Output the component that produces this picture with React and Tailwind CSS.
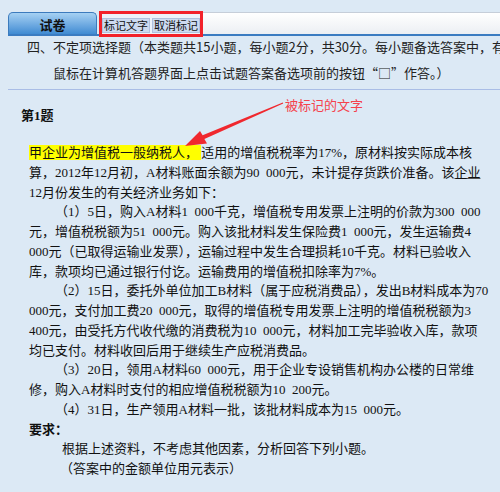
export default function App() {
  const lines = [
    { pad: "pl-[26px]", text: "（1）5日，购入A材料1\u2002000千克，增值税专用发票上注明的价款为300\u2002000" },
    { pad: "", text: "元，增值税税额为51\u2002000元。购入该批材料发生保险费1\u2002000元，发生运输费4" },
    { pad: "", text: "000元（已取得运输业发票），运输过程中发生合理损耗10千克。材料已验收入" },
    { pad: "", text: "库，款项均已通过银行付讫。运输费用的增值税扣除率为7%。" },
    { pad: "pl-[26px]", text: "（2）15日，委托外单位加工B材料（属于应税消费品），发出B材料成本为70" },
    { pad: "", text: "000元，支付加工费20\u2002000元，取得的增值税专用发票上注明的增值税税额为3" },
    { pad: "", text: "400元，由受托方代收代缴的消费税为10\u2002000元，材料加工完毕验收入库，款项" },
    { pad: "", text: "均已支付。材料收回后用于继续生产应税消费品。" },
    { pad: "pl-[26px]", text: "（3）20日，领用A材料60\u2002000元，用于企业专设销售机构办公楼的日常维" },
    { pad: "", text: "修，购入A材料时支付的相应增值税税额为10\u2002200元。" },
    { pad: "pl-[26px]", text: "（4）31日，生产领用A材料一批，该批材料成本为15\u2002000元。" },
  ];

  return (
    <div className="relative w-[500px] h-[492px] overflow-hidden bg-[#dce9f5] text-[#111]">
      {/* tab bar */}
      <div className="ml-2 mt-3 flex items-start h-[22px]">
        <div className="w-[89px] h-[22px] rounded-t-[5px] border border-b-0 border-[#3c7bbd] bg-gradient-to-b from-[#a6d1f3] to-[#3f8bd2] flex items-center justify-center text-[13px] font-bold font-['Noto_Sans_CJK_SC',sans-serif] pt-[2px]">
          试卷
        </div>
        <div className="relative z-10 ml-[2px] -mt-px w-[104px] h-[26px] border-[3px] border-[#f2222b] bg-[#edf2fa] flex items-center justify-center gap-[2px] pt-[2px]">
          <button className="h-[15px] px-px bg-[#ccdaf0] border border-[#b0c1de] text-[11px] leading-none whitespace-nowrap text-[#111] font-['Noto_Sans_CJK_SC',sans-serif]">
            标记文字
          </button>
          <button className="h-[15px] px-px bg-[#ccdaf0] border border-[#b0c1de] text-[11px] leading-none whitespace-nowrap text-[#111] font-['Noto_Sans_CJK_SC',sans-serif]">
            取消标记
          </button>
        </div>
        <div className="flex-1 h-[22px] border-t border-[#c6ced9] bg-gradient-to-b from-white to-[#eceff3]" />
      </div>
      <div className="ml-2 h-[2px] bg-[#3b7cc1]" />

      {/* instructions */}
      <div className="-mt-[2px] text-[13px] leading-[26px] text-[#222] whitespace-nowrap font-['Noto_Sans_CJK_SC',sans-serif]">
        <div className="pl-[27px]">
          四、不定项选择题（本类题共15小题，每小题2分，共30分。每小题备选答案中，有一个或一个以上符合题意的正确答案。请使用
        </div>
        <div className="pl-[53px]">鼠标在计算机答题界面上点击试题答案备选项前的按钮“□”作答。）</div>
      </div>
      <div className="ml-2 mt-[3px] h-px bg-[#a9bde6]" />

      {/* question */}
      <div className="mt-[16px] pl-[21px] text-[13px] leading-[20px] font-bold font-['Liberation_Serif','Noto_Sans_CJK_SC',serif]">
        第1题
      </div>
      <div className="mt-[17px] pl-[29px] text-[13px] leading-[19.75px] whitespace-nowrap font-['Liberation_Serif','Noto_Sans_CJK_SC',serif]">
        <div>
          <span className="bg-[#ffff00]">甲企业为增值税一般纳税人， </span>
          适用的增值税税率为17%，原材料按实际成本核
        </div>
        <div>
          算，2012年12月初，A材料账面余额为90{"\u2002"}000元，未计提存货跌价准备。该<span className="underline decoration-[#555]">企业</span>
        </div>
        <div>12月份发生的有关经济业务如下：</div>
        {lines.map((l, i) => (
          <div key={i} className={l.pad}>
            {l.text}
          </div>
        ))}
        <div className="font-bold">要求：</div>
        <div className="pl-[33px]">根据上述资料，不考虑其他因素，分析回答下列小题。</div>
        <div className="pl-[31px]">（答案中的金额单位用元表示）</div>
      </div>

      {/* annotation */}
      <div className="absolute left-[285px] top-[95px] text-[13px] leading-[20px] text-[#f5414b] font-['Noto_Sans_CJK_SC',sans-serif]">
        被标记的文字
      </div>
      <svg className="absolute left-0 top-0 pointer-events-none" width="500" height="492">
        <polygon
          points="185,146 200,131 202.6,135.3 282.8,102.5 283.2,103.6 204.4,139 207,143.5"
          fill="#f0282e"
        />
      </svg>
    </div>
  );
}
